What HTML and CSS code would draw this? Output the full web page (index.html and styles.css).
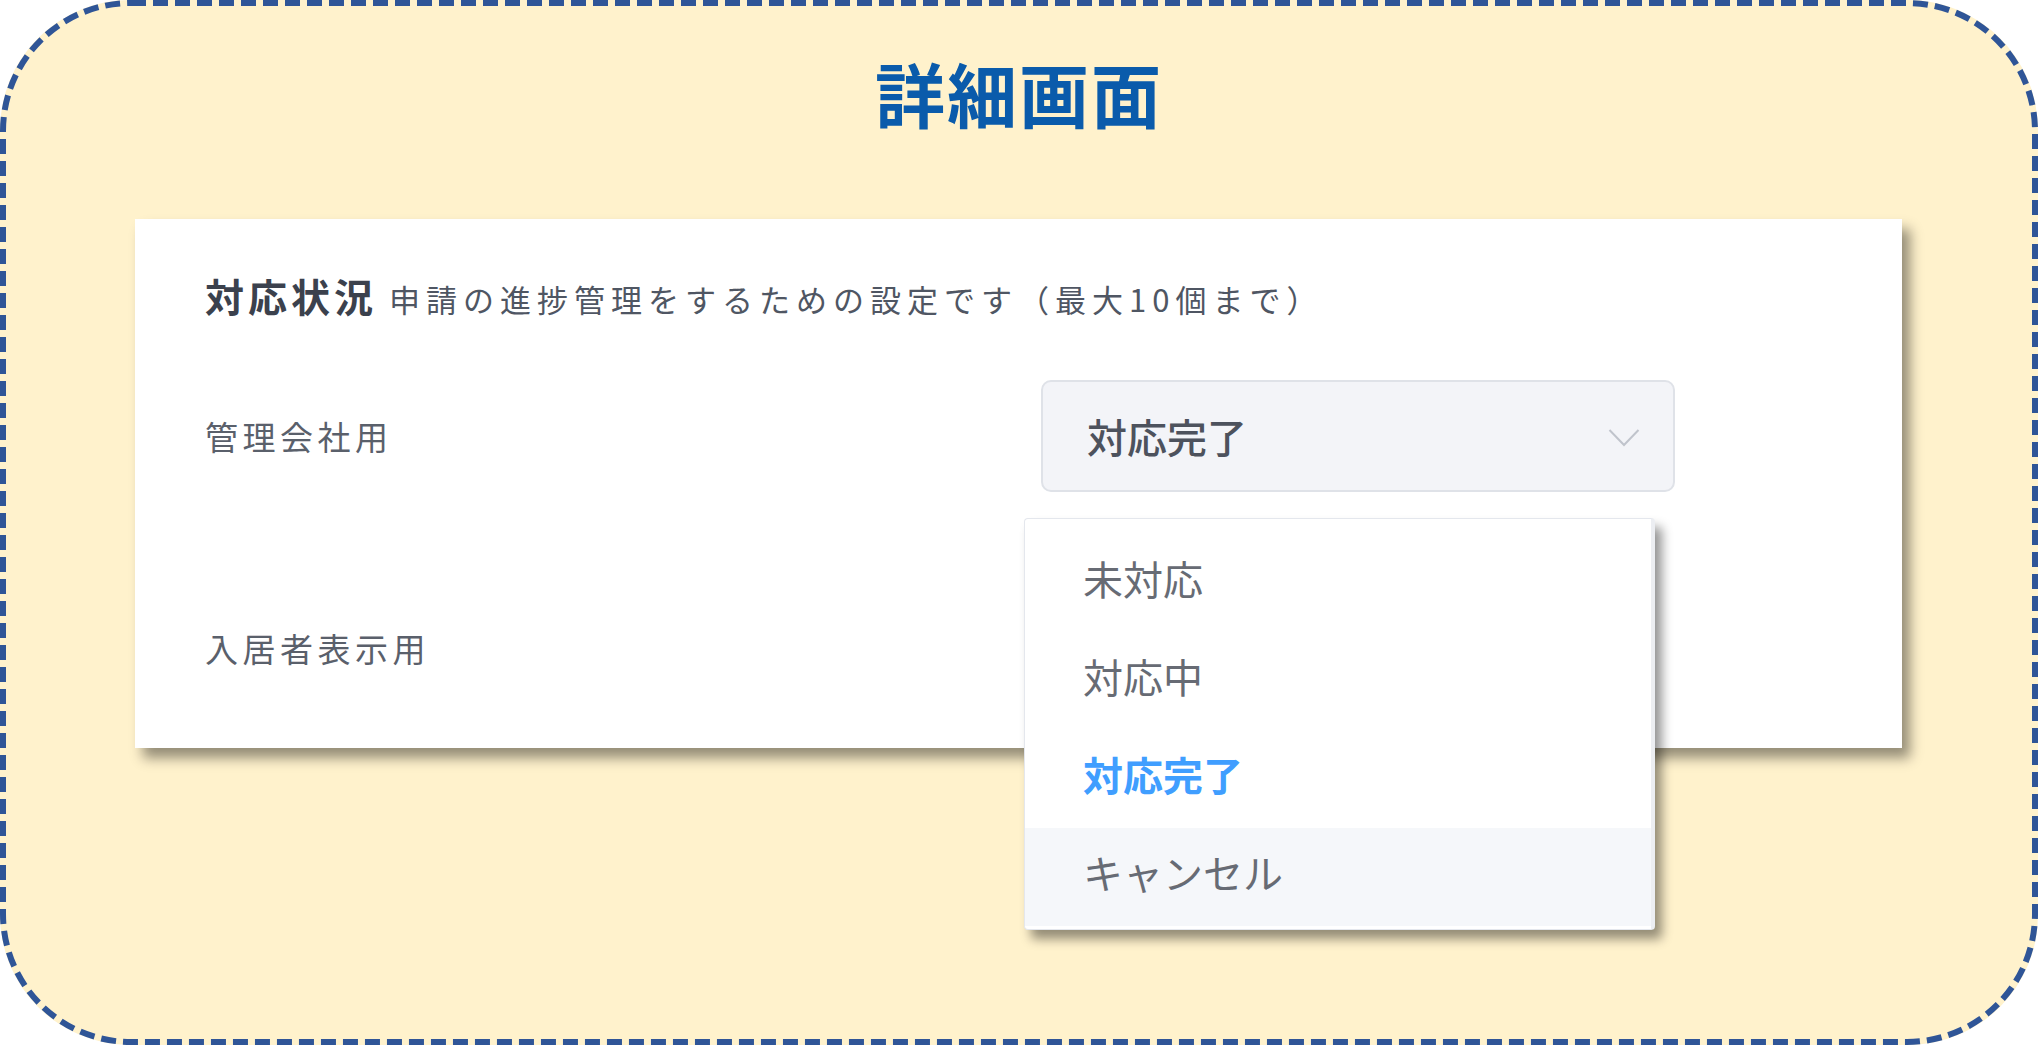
FILE: index.html
```html
<!DOCTYPE html>
<html lang="ja">
<head>
<meta charset="utf-8">
<title>詳細画面</title>
<link rel="stylesheet" href="styles.css">
</head>
<body>
<div class="frame">
  <svg class="frame-border" width="2038" height="1045" viewBox="0 0 2038 1045">
    <rect x="3" y="3" width="2032" height="1039" rx="128" ry="128" fill="none" stroke="#2f5597" stroke-width="6" stroke-dasharray="15 7"/>
  </svg>
  <h1 class="title">詳細画面</h1>
  <section class="card">
    <div class="card-head">
      <span class="card-title">対応状況</span>
      <span class="card-sub">申請の進捗管理をするための設定です（最大10個まで）</span>
    </div>
    <div class="form">
      <div class="row">
        <div class="label">管理会社用</div>
        <div class="select-wrap">
          <div class="select">
            <span class="select-value">対応完了</span>
            <svg class="chevron" width="32" height="20" viewBox="0 0 32 20">
              <polyline points="1.5,2 16,17 30.5,2" fill="none" stroke="#c0c4cc" stroke-width="2"/>
            </svg>
          </div>
          <ul class="dropdown">
            <li class="item">未対応</li>
            <li class="item">対応中</li>
            <li class="item selected">対応完了</li>
            <li class="item hover">キャンセル</li>
          </ul>
        </div>
      </div>
      <div class="row">
        <div class="label">入居者表示用</div>
      </div>
    </div>
  </section>
</div>
</body>
</html>
```
FILE: styles.css
```css
* { box-sizing: border-box; }
html, body { margin: 0; padding: 0; background: #ffffff; }
body {
  font-family: "Noto Sans CJK JP", "Noto Sans", sans-serif;
  width: 2038px;
  height: 1045px;
  overflow: hidden;
}
.frame {
  position: relative;
  width: 2038px;
  height: 1045px;
  border-radius: 130px;
  background: #fff2cc;
  padding-top: 58px;
}
.frame-border {
  position: absolute;
  left: 0;
  top: 0;
  pointer-events: none;
}
.title {
  margin: 0;
  text-align: center;
  font-size: 70px;
  line-height: 70px;
  font-weight: 700;
  color: #0a5bab;
  letter-spacing: 2px;
}
.card {
  margin: 91px 0 0 135px;
  width: 1767px;
  height: 529px;
  background: #ffffff;
  box-shadow: 8px 10px 12px rgba(0, 0, 0, 0.42);
  padding: 50px 70px 44px 70px;
}
.card-head {
  display: flex;
  align-items: baseline;
  height: 52px;
  line-height: 52px;
}
.card-title {
  font-size: 39px;
  font-weight: 700;
  color: #3b414d;
  letter-spacing: 4px;
  margin-right: 12px;
}
.card-sub {
  font-size: 31px;
  color: #4f5663;
  letter-spacing: 6px;
}
.form {
  margin-top: 59px;
}
.row {
  display: flex;
  align-items: center;
  height: 112px;
}
.row + .row {
  margin-top: 100px;
}
.label {
  width: 836px;
  font-size: 33px;
  letter-spacing: 4.5px;
  color: #5a606b;
}
.select-wrap {
  position: relative;
}
.select {
  width: 634px;
  height: 112px;
  background: #f3f4f8;
  border: 2px solid #dfe2e8;
  border-radius: 10px;
  display: flex;
  align-items: center;
  justify-content: space-between;
  padding: 0 33px 0 44px;
}
.select-value {
  font-size: 40px;
  color: #4d525d;
  font-weight: 500;
}
.chevron {
  display: block;
  margin-top: 4px;
}
.dropdown {
  position: absolute;
  left: -17px;
  top: 138px;
  width: 631px;
  margin: 0;
  padding: 15px 0 3px 0;
  list-style: none;
  background: #ffffff;
  border: 1px solid #e4e7ed;
  border-right: 4px solid #eceef2;
  border-radius: 4px;
  box-shadow: 7px 9px 11px rgba(0, 0, 0, 0.42);
  z-index: 2;
}
.item {
  height: 98px;
  line-height: 88px;
  padding-left: 58px;
  font-size: 40px;
  color: #676b74;
}
.item.selected {
  color: #409eff;
  font-weight: 700;
}
.item.hover {
  background: #f5f7fa;
}
```
